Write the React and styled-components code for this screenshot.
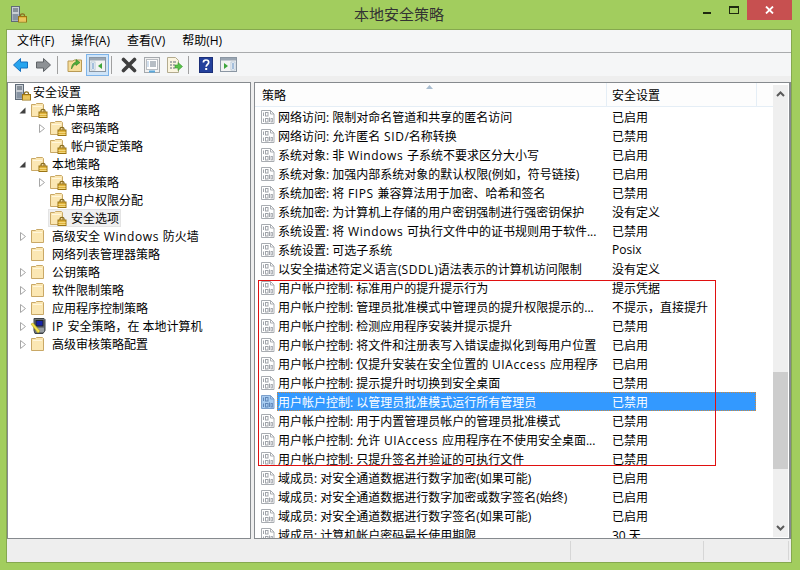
import React from "react";
import styled, { createGlobalStyle } from "styled-components";

const FONT = `"Open Sans", "Noto Sans CJK SC", "Liberation Sans", sans-serif`;

const tree = [
  { label: "帐户策略", depth: 1, arrow: "open", icon: "lock" },
  { label: "密码策略", depth: 2, arrow: "closed", icon: "lock" },
  { label: "帐户锁定策略", depth: 2, icon: "lock" },
  { label: "本地策略", depth: 1, arrow: "open", icon: "lock" },
  { label: "审核策略", depth: 2, arrow: "closed", icon: "lock" },
  { label: "用户权限分配", depth: 2, icon: "lock" },
  { label: "安全选项", depth: 2, icon: "lock", current: true },
  { label: "高级安全 Windows 防火墙", depth: 1, arrow: "closed", icon: "folder" },
  { label: "网络列表管理器策略", depth: 1, icon: "folder" },
  { label: "公钥策略", depth: 1, arrow: "closed", icon: "folder" },
  { label: "软件限制策略", depth: 1, arrow: "closed", icon: "folder" },
  { label: "应用程序控制策略", depth: 1, arrow: "closed", icon: "folder" },
  { label: "IP 安全策略，在 本地计算机", depth: 1, arrow: "closed", icon: "ip" },
  { label: "高级审核策略配置", depth: 1, arrow: "closed", icon: "folder" },
];

const rows = [
  ["网络访问: 限制对命名管道和共享的匿名访问", "已启用"],
  ["网络访问: 允许匿名 SID/名称转换", "已禁用"],
  ["系统对象: 非 Windows 子系统不要求区分大小写", "已启用"],
  ["系统对象: 加强内部系统对象的默认权限(例如，符号链接)", "已启用"],
  ["系统加密: 将 FIPS 兼容算法用于加密、哈希和签名", "已禁用"],
  ["系统加密: 为计算机上存储的用户密钥强制进行强密钥保护", "没有定义"],
  ["系统设置: 将 Windows 可执行文件中的证书规则用于软件...", "已禁用"],
  ["系统设置: 可选子系统", "Posix"],
  ["以安全描述符定义语言(SDDL)语法表示的计算机访问限制", "没有定义"],
  ["用户帐户控制: 标准用户的提升提示行为", "提示凭据"],
  ["用户帐户控制: 管理员批准模式中管理员的提升权限提示的...", "不提示，直接提升"],
  ["用户帐户控制: 检测应用程序安装并提示提升", "已禁用"],
  ["用户帐户控制: 将文件和注册表写入错误虚拟化到每用户位置", "已启用"],
  ["用户帐户控制: 仅提升安装在安全位置的 UIAccess 应用程序", "已启用"],
  ["用户帐户控制: 提示提升时切换到安全桌面", "已禁用"],
  ["用户帐户控制: 以管理员批准模式运行所有管理员", "已禁用", true],
  ["用户帐户控制: 用于内置管理员帐户的管理员批准模式", "已禁用"],
  ["用户帐户控制: 允许 UIAccess 应用程序在不使用安全桌面...", "已禁用"],
  ["用户帐户控制: 只提升签名并验证的可执行文件", "已禁用"],
  ["域成员: 对安全通道数据进行数字加密(如果可能)", "已启用"],
  ["域成员: 对安全通道数据进行数字加密或数字签名(始终)", "已启用"],
  ["域成员: 对安全通道数据进行数字签名(如果可能)", "已启用"],
  ["域成员: 计算机帐户密码最长使用期限", "30 天"],
];

// latin words run a little wider in the original UI font
function MixedText({ text }) {
  return text.split(/( ?[A-Za-z]{2,} ?)/).map((part, i) =>
    i % 2 ? <LatinRun key={i}>{part}</LatinRun> : part
  );
}

function LockBadge({ x = 0, y = 0 }) {
  return (
    <g transform={`translate(${x} ${y})`}>
      <path d="M2.5 4V2.6C2.5 1.4 3.3.8 4.5.8s2 .6 2 1.8V4" fill="none" stroke="#8a6d1f" strokeWidth="1.2" />
      <rect x="0.5" y="3.5" width="8" height="5.5" fill="#e0b33c" stroke="#9a7414" />
      <path d="M1 6h7M1 8h7" stroke="#f3d77c" />
    </g>
  );
}

function FolderIcon({ lock }) {
  return (
    <svg width="18" height="16" viewBox="0 0 18 16">
      <path d="M1.5 14.5V2.5h4l1-1h6l1 1v12z" fill="#fbe7b3" stroke="#c9a866" />
      <path d="M3 4.5h9" stroke="#fff6dc" />
      {lock && <LockBadge x={8.5} y={6.5} />}
    </svg>
  );
}

function ServerLockIcon() {
  return (
    <svg width="18" height="18" viewBox="0 0 18 18">
      <rect x="1.5" y="1.5" width="8" height="15" fill="#c9ced4" stroke="#5f6b78" />
      <path d="M3 4h5M3 6h5" stroke="#46525f" />
      <rect x="2.5" y="9" width="6" height="6.5" fill="#8794a3" />
      <LockBadge x={8} y={8} />
    </svg>
  );
}

function IpIcon() {
  return (
    <svg width="18" height="18" viewBox="0 0 18 18">
      <path d="M4 1.5h10l1 1v11l-2 3H5l-1-3z" fill="#6d7378" stroke="#3d4246" />
      <rect x="6" y="3.5" width="7" height="5.5" fill="#1723a8" stroke="#20252a" />
      <path d="M6 12h8M6 14h8" stroke="#c5c9cc" />
      <path d="M1 7l2-1 7 8-2 2z" fill="#f4e24a" stroke="#b9a316" strokeWidth=".6" />
    </svg>
  );
}

// binary policy page: folded sheet with rows of 1s and 0s
function PolicyIcon({ selected }) {
  const edge = selected ? "#7ca0cc" : "#a9adb2";
  const bit = selected ? "#5f86b8" : "#a0a4aa";
  return (
    <svg width="16" height="16" viewBox="0 0 16 16">
      <path d="M1.5 1.5h9l3.5 3.5v9.5h-12.5z" fill={selected ? "#a8ccf0" : "#fff"} stroke={edge} />
      <path d="M10.5 1.5v3.5h3.5" fill="none" stroke={edge} />
      <path d="M3.5 3.5v3.5M9.5 8.5v4.5M3.5 9.5v3.5" stroke={bit} />
      <rect x="5.5" y="3.5" width="2.5" height="3.5" fill="none" stroke={bit} />
      <rect x="5.5" y="9.5" width="2.5" height="3.5" fill="none" stroke={bit} />
      <rect x="11" y="9.5" width="1.5" height="3.5" fill="none" stroke={bit} strokeWidth=".8" />
    </svg>
  );
}

function NavArrow({ dir, color, edge }) {
  const d = "M1 8l7-6.5V5h7v6H8v3.5z";
  return (
    <svg width="17" height="16" viewBox="0 0 17 16">
      <path d={d} fill={color} stroke={edge} transform={dir === "right" ? "matrix(-1 0 0 1 16.5 0)" : "translate(.5 0)"} />
    </svg>
  );
}

function UpFolderIcon() {
  return (
    <svg width="16" height="17" viewBox="0 0 16 17">
      <path d="M1 15.5V5h5l1-1h7.5v11.5z" fill="#f6dd9a" stroke="#b99a55" />
      <path d="M4.5 13c0-4 1.5-6 4.5-7V3.5L13 6.5 9 9.5V8c-2 .6-3 2-4.5 5z" fill="#4fae3a" stroke="#2f7f24" strokeWidth=".6" />
    </svg>
  );
}

function PaneIcon({ side }) {
  return (
    <svg width="17" height="15" viewBox="0 0 17 15">
      <rect x=".5" y=".5" width="16" height="14" fill="#f3f3f3" stroke="#8a96a3" />
      <rect x="1" y="1" width="15" height="2.5" fill="#9aa6b3" />
      <rect x={side === "tree" ? 2 : 11} y="5" width="4" height="8" fill="#fff" stroke="#9fb6cc" strokeWidth=".7" />
      <path d={side === "tree" ? "M13 6v6l-4-3z" : "M4 6v6l4-3z"} fill="#3fa63c" />
      <path d={side === "tree" ? "M3 7h2M3 9h2M3 11h2" : "M12 7h2M12 9h2M12 11h2"} stroke="#4a7fb8" />
    </svg>
  );
}

function DeleteIcon() {
  return (
    <svg width="16" height="16" viewBox="0 0 16 16">
      <path d="M2.5 2.5l11 11M13.5 2.5l-11 11" stroke="#3f3f3f" strokeWidth="3.6" strokeLinecap="round" />
    </svg>
  );
}

function PropertiesIcon() {
  return (
    <svg width="16" height="16" viewBox="0 0 16 16">
      <rect x=".5" y=".5" width="15" height="15" fill="#f1f1f1" stroke="#a5a9ad" />
      <rect x="2.5" y="2.5" width="11" height="10" fill="#fff" stroke="#b9bdc2" />
      <path d="M6 5h6M6 7h6M6 9h6" stroke="#6f7c8a" />
      <path d="M3.5 5h1M3.5 7h1M3.5 9h1" stroke="#4a7fb8" />
      <rect x="5" y="13.5" width="6" height="2" fill="#5aa8dc" />
    </svg>
  );
}

function ExportIcon() {
  return (
    <svg width="17" height="16" viewBox="0 0 17 16">
      <path d="M1.5.5h8l3 3v12h-11z" fill="#fbf5e0" stroke="#b3ab8f" />
      <path d="M4 5h2M7 5h3M4 8h2M7 8h2M4 11h2M7 11h2" stroke="#5f6b78" />
      <path d="M9 8h3V5.5L16.5 9.5 12 13.5V11H9z" fill="#58c24a" stroke="#3a9530" strokeWidth=".6" />
    </svg>
  );
}

function HelpIcon() {
  return (
    <svg width="14" height="16" viewBox="0 0 14 16">
      <rect x=".5" y=".5" width="13" height="15" fill="#23409c" stroke="#1b2f78" />
      <path d="M4.4 5.4C4.4 3.8 5.5 3 7 3s2.7.8 2.7 2.3c0 2.2-2.5 2.2-2.5 4.4" fill="none" stroke="#fff" strokeWidth="1.7" />
      <rect x="6.2" y="11" width="2" height="2" fill="#fff" />
    </svg>
  );
}

function ExpandArrow({ kind }) {
  if (kind === "open") {
    return (
      <svg width="7" height="7" viewBox="0 0 7 7">
        <path d="M6.5.5v6h-6z" fill="#404040" />
      </svg>
    );
  }
  return (
    <svg width="6" height="9" viewBox="0 0 6 9">
      <path d="M.5.5l5 4-5 4z" fill="#fff" stroke="#a6a6a6" />
    </svg>
  );
}

function TreeIcon({ kind }) {
  if (kind === "ip") return <IpIcon />;
  return <FolderIcon lock={kind === "lock"} />;
}

export default function App() {
  return (
    <Frame>
      <GlobalStyle />
      <TitleBar>
        <AppIcon><ServerLockIcon /></AppIcon>
        <Title>本地安全策略</Title>
        <WindowButtons>
          <MinButton />
          <MaxButton />
          <CloseButton>
            <svg width="9" height="8" viewBox="0 0 9 8">
              <path d="M1 .5l7 7M8 .5l-7 7" stroke="#fff" strokeWidth="1.8" />
            </svg>
          </CloseButton>
        </WindowButtons>
      </TitleBar>

      <Client>
        <MenuBar>
          <MenuItem>文件(F)</MenuItem>
          <MenuItem>操作(A)</MenuItem>
          <MenuItem>查看(V)</MenuItem>
          <MenuItem>帮助(H)</MenuItem>
        </MenuBar>

        <Toolbar>
          <ToolButton><NavArrow dir="left" color="#27a4ee" edge="#1670c0" /></ToolButton>
          <ToolButton><NavArrow dir="right" color="#8d9195" edge="#5e6266" /></ToolButton>
          <ToolSeparator />
          <ToolButton><UpFolderIcon /></ToolButton>
          <ToolButton $active><PaneIcon side="tree" /></ToolButton>
          <ToolSeparator />
          <ToolButton><DeleteIcon /></ToolButton>
          <ToolButton><PropertiesIcon /></ToolButton>
          <ToolButton><ExportIcon /></ToolButton>
          <ToolSeparator />
          <ToolButton><HelpIcon /></ToolButton>
          <ToolButton><PaneIcon side="action" /></ToolButton>
        </Toolbar>

        <Panes>
          <TreePane>
            <TreeRoot>
              <ServerLockIcon />
              <span>安全设置</span>
            </TreeRoot>
            {tree.map((node) => (
              <TreeRow key={node.label} $depth={node.depth}>
                <ArrowSlot>{node.arrow && <ExpandArrow kind={node.arrow} />}</ArrowSlot>
                <TreeLabel $current={node.current}>
                  <TreeIcon kind={node.icon} />
                  <span><MixedText text={node.label} /></span>
                </TreeLabel>
              </TreeRow>
            ))}
          </TreePane>

          <ListPane>
            <ListColumn>
              <ListHeader>
                <HeaderCell $name>
                  策略
                  <SortMark>
                    <svg width="7" height="4" viewBox="0 0 7 4">
                      <path d="M3.5 0L7 4H0z" fill="#a9bdd0" />
                    </svg>
                  </SortMark>
                </HeaderCell>
                <HeaderCell>安全设置</HeaderCell>
                <HeaderFill />
              </ListHeader>
              <RowsArea>
                {rows.map(([name, value, selected]) => (
                  <Row key={name}>
                    <PolicyIcon selected={selected} />
                    <RowBody $selected={selected}>
                      <NameCell><MixedText text={name} /></NameCell>
                      <ValueCell>{value}</ValueCell>
                    </RowBody>
                  </Row>
                ))}
              </RowsArea>
              <Highlight />
            </ListColumn>
            <Scrollbar>
              <ScrollButton>
                <svg width="9" height="6" viewBox="0 0 9 6">
                  <path d="M1 5l3.5-3.5L8 5" fill="none" stroke="#5a5a5a" strokeWidth="2" />
                </svg>
              </ScrollButton>
              <ScrollTrack>
                <ScrollThumb />
              </ScrollTrack>
              <ScrollButton>
                <svg width="9" height="6" viewBox="0 0 9 6">
                  <path d="M1 1l3.5 3.5L8 1" fill="none" stroke="#5a5a5a" strokeWidth="2" />
                </svg>
              </ScrollButton>
            </Scrollbar>
          </ListPane>
        </Panes>

        <StatusBar>
          <StatusCell $width={564} />
          <StatusCell $width={133} />
          <StatusCell $width={85} />
        </StatusBar>
      </Client>
    </Frame>
  );
}

const GlobalStyle = createGlobalStyle`
html, body {
  margin: 0;
  padding: 0;
  background: #a2cd5e;
}
* {
  box-sizing: border-box;
}
`;

const Frame = styled.div`
display: flex;
flex-direction: column;
width: 800px;
height: 570px;
background: #a2cd5e;
padding: 0 8px 7px 6px;
font-family: ${FONT};
font-size: 12px;
color: #000;
overflow: hidden;
`;

const LatinRun = styled.span`
letter-spacing: 0.6px;
white-space: pre;
`;

const TitleBar = styled.div`
position: relative;
display: flex;
align-items: flex-start;
justify-content: center;
height: 29px;
flex: none;
`;

const AppIcon = styled.div`
position: absolute;
left: 4px;
top: 5px;
`;

const Title = styled.div`
font-size: 15px;
line-height: 28px;
color: #333;
`;

const WindowButtons = styled.div`
position: absolute;
right: 0;
top: 0;
display: flex;
align-items: flex-start;
`;

const MinButton = styled.div`
width: 8px;
height: 2px;
margin: 12px 18px 0 0;
background: #1f2a10;
`;

const MaxButton = styled.div`
width: 10px;
height: 8px;
margin: 6px 8px 0 0;
border: 1px solid #1f2a10;
border-top-width: 2px;
`;

const CloseButton = styled.div`
display: flex;
align-items: center;
justify-content: center;
width: 45px;
height: 20px;
background: #c75050;
`;

const Client = styled.div`
display: flex;
flex-direction: column;
flex: 1;
min-height: 0;
background: #f5f6f7;
border: 1px solid #85a84f;
`;

const MenuBar = styled.div`
display: flex;
flex: none;
height: 23px;
padding: 0 0 0 10px;
gap: 17px;
align-items: flex-start;
border-bottom: 1px solid #a9abad;
`;

const MenuItem = styled.div`
line-height: 22px;
`;

const Toolbar = styled.div`
display: flex;
flex: none;
align-items: center;
height: 23px;
padding-left: 2px;
`;

const ToolButton = styled.div`
display: flex;
align-items: center;
justify-content: center;
width: 23px;
height: 22px;
background: ${(p) => (p.$active ? "#cfe4f8" : "transparent")};
border: 1px solid ${(p) => (p.$active ? "#7db4ea" : "transparent")};
`;

const ToolSeparator = styled.div`
width: 1px;
height: 18px;
margin: 0 5px 0 2px;
background: #a0a0a0;
`;

const Panes = styled.div`
display: flex;
flex: 1;
min-height: 0;
gap: 3px;
padding-top: 6px;
background: #eeeeee;
`;

const TreePane = styled.div`
width: 244px;
flex: none;
background: #fff;
border: 1px solid #868a8e;
overflow: hidden;
`;

const TreeRoot = styled.div`
display: flex;
align-items: center;
gap: 1px;
height: 18px;
padding-left: 6px;
`;

const TreeRow = styled.div`
display: flex;
align-items: center;
height: 18px;
padding-left: ${(p) => (p.$depth - 1) * 19 + 10}px;
`;

const ArrowSlot = styled.div`
display: flex;
align-items: center;
justify-content: center;
width: 9px;
height: 18px;
flex: none;
`;

const TreeLabel = styled.div`
display: flex;
align-items: center;
gap: 4px;
height: 18px;
margin-left: 2px;
padding: 0 2px 0 1px;
white-space: nowrap;
background: ${(p) => (p.$current ? "#f0f0f0" : "transparent")};
outline: ${(p) => (p.$current ? "1px solid #e4e4e4" : "none")};
outline-offset: -1px;
`;

const ListPane = styled.div`
display: flex;
flex: 1;
min-width: 0;
background: #fff;
border: 1px solid #868a8e;
border-right-width: 2px;
overflow: hidden;
`;

const ListColumn = styled.div`
position: relative;
flex: 1;
min-width: 0;
display: flex;
flex-direction: column;
`;

const ListHeader = styled.div`
display: flex;
flex: none;
height: 24px;
border-bottom: 1px solid #e5eef6;
`;

const HeaderCell = styled.div`
position: relative;
width: ${(p) => (p.$name ? 352 : 150)}px;
flex: none;
padding-left: ${(p) => (p.$name ? 7 : 5)}px;
line-height: 26px;
border-right: 1px solid #e5eef6;
background: #fdfdfd;
`;

const HeaderFill = styled.div`
flex: 1;
background: #fdfdfd;
`;

const SortMark = styled.span`
position: absolute;
left: 171px;
top: 0;
line-height: 4px;
display: block;
`;

const RowsArea = styled.div`
flex: 1;
min-height: 0;
overflow: hidden;
`;

const Row = styled.div`
display: flex;
align-items: center;
width: 501px;
height: 19px;
padding-left: 5px;
`;

const RowBody = styled.div`
display: flex;
align-items: center;
flex: 1;
height: 19px;
margin-left: 1px;
padding-left: 1px;
color: ${(p) => (p.$selected ? "#fff" : "#000")};
background: ${(p) => (p.$selected ? "#3399ff" : "transparent")};
outline: ${(p) => (p.$selected ? "1px dotted #d08a3a" : "none")};
outline-offset: -1px;
`;

const NameCell = styled.div`
width: 334px;
flex: none;
white-space: nowrap;
overflow: hidden;
`;

const ValueCell = styled.div`
white-space: nowrap;
`;

const Highlight = styled.div`
position: absolute;
left: 3px;
top: 197px;
width: 458px;
height: 186px;
border: 1px solid #e01010;
pointer-events: none;
`;

const Scrollbar = styled.div`
display: flex;
flex-direction: column;
width: 15px;
flex: none;
margin: 2px 1px 1px 0;
background: #efefef;
`;

const ScrollButton = styled.div`
display: flex;
align-items: center;
justify-content: center;
height: 18px;
flex: none;
`;

const ScrollTrack = styled.div`
flex: 1;
padding-top: 269px;
`;

const ScrollThumb = styled.div`
height: 97px;
background: #cdcdcd;
`;

const StatusBar = styled.div`
display: flex;
flex: none;
height: 23px;
padding: 2px 0;
background: #eeeeee;
`;

const StatusCell = styled.div`
width: ${(p) => p.$width}px;
flex: none;
border-right: 1px solid #d6d6d6;
`;
